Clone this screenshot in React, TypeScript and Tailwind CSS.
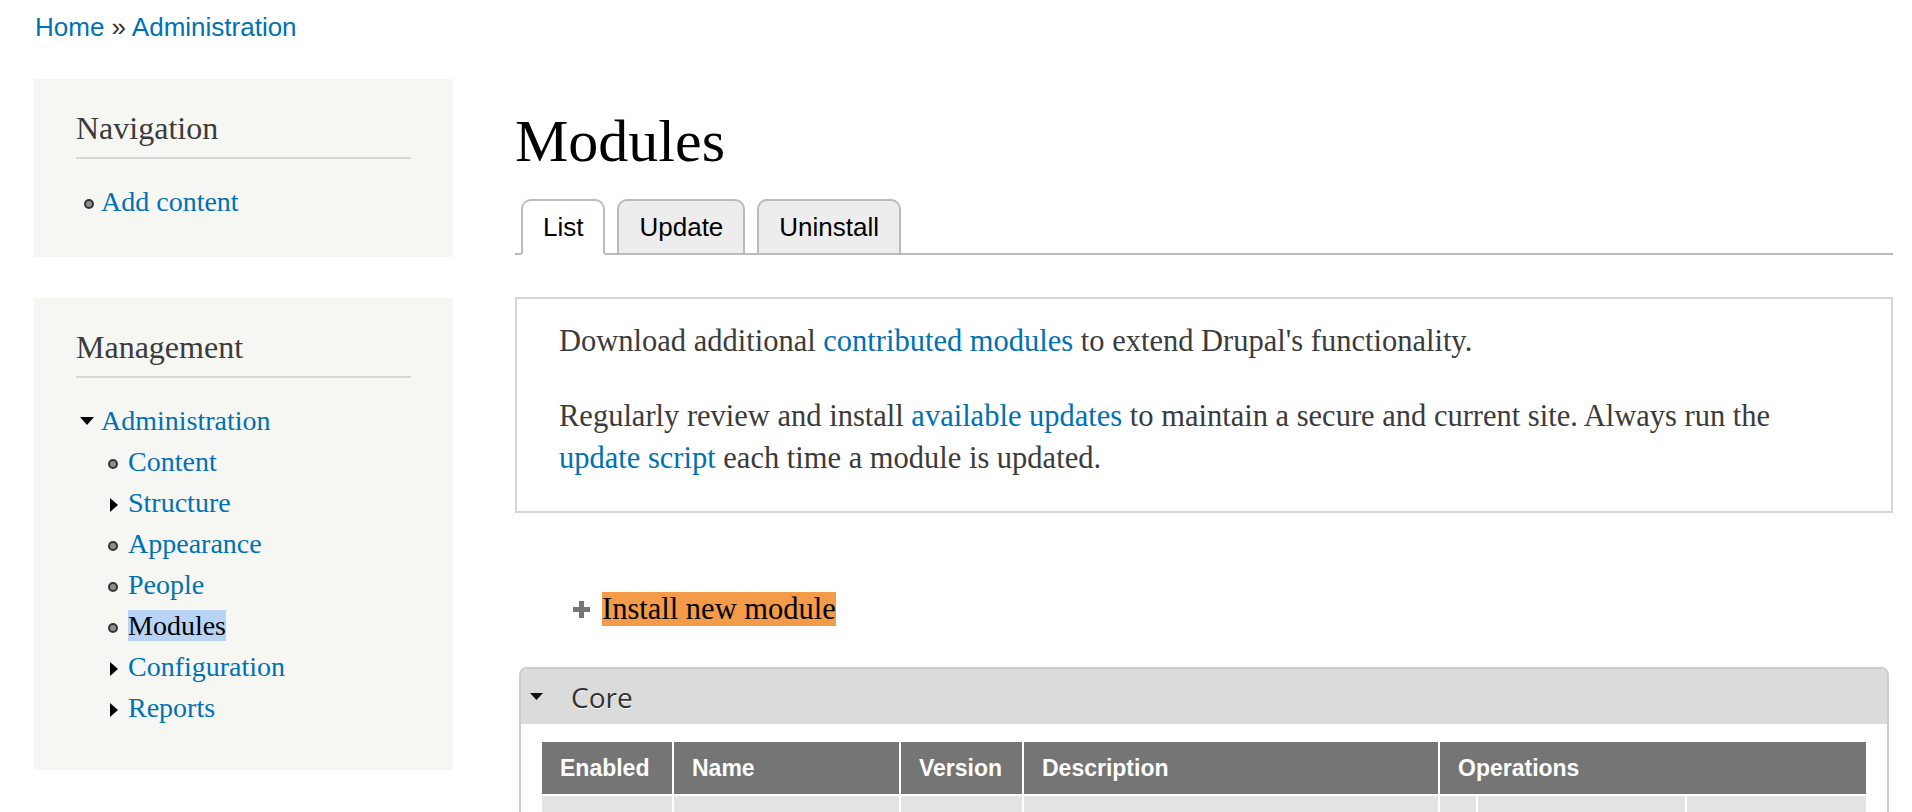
import React from 'react';

type Marker = 'leaf' | 'open' | 'closed';

interface NavItem {
  label: string;
  marker: Marker;
  active?: boolean;
}

const adminChildren: NavItem[] = [
  { label: 'Content', marker: 'leaf' },
  { label: 'Structure', marker: 'closed' },
  { label: 'Appearance', marker: 'leaf' },
  { label: 'People', marker: 'leaf' },
  { label: 'Modules', marker: 'leaf', active: true },
  { label: 'Configuration', marker: 'closed' },
  { label: 'Reports', marker: 'closed' },
];

function MarkerIcon({ type }: { type: Marker }) {
  if (type === 'leaf') {
    return <span className="mt-[4px] block h-[10px] w-[10px] rounded-full border-[2.5px] border-[#333] bg-[#8f8f8f]" />;
  }
  if (type === 'open') {
    return (
      <svg width="14" height="8" viewBox="0 0 14 8" className="mt-[0px] block">
        <polygon points="0,0 14,0 7,8" fill="#000" />
      </svg>
    );
  }
  return (
    <svg width="8" height="14" viewBox="0 0 8 14" className="mt-[4px] block">
      <polygon points="0,0 8,7 0,14" fill="#000" />
    </svg>
  );
}

function NavRow({ item, child }: { item: NavItem; child?: boolean }) {
  return (
    <div className={`flex items-center ${child ? 'pl-[27px]' : ''}`}>
      <span className={`flex w-[25px] justify-end ${child ? 'pr-[10px]' : 'pr-[7px]'}`}>
        <MarkerIcon type={item.marker} />
      </span>
      <a
        href="#"
        className={`leading-[41px] ${item.active ? 'text-black' : 'text-[#0071b3]'}`}
      >
        <span className={item.active ? 'bg-[#b7d4f6]' : ''}>{item.label}</span>
      </a>
    </div>
  );
}

function SidebarBlock({ title, children, last }: { title: string; children: React.ReactNode; last?: boolean }) {
  return (
    <section className={`bg-[#f6f6f2] px-[42px] pt-[29px] ${last ? 'pb-[42px]' : 'pb-[35px]'}`}>
      <h2 className="border-b-2 border-[#d5d5d3] pb-[9px] text-[32px] leading-[40px] text-[#3b3b3b]">{title}</h2>
      <ul className="mt-[22px] text-[28px]">{children}</ul>
    </section>
  );
}

function Tabs() {
  const tabs = ['List', 'Update', 'Uninstall'];
  return (
    <ul className="mt-[22px] flex gap-[12px] border-b-2 border-[#bbbbbb] pl-[6px] font-['Liberation_Sans',Arial,sans-serif] text-[26px]">
      {tabs.map((t, i) => (
        <li
          key={t}
          className={`-mb-[2px] rounded-t-[10px] border-2 px-5 leading-[52px] text-black ${
            i === 0 ? 'border-[#bbbbbb] border-b-white bg-white' : 'border-[#bbbbbb] bg-[#ededed]'
          }`}
        >
          {t}
        </li>
      ))}
    </ul>
  );
}

function PlusIcon() {
  return (
    <svg width="17" height="17" viewBox="0 0 17 17" className="block">
      <path d="M6 0h5v6h6v5h-6v6H6v-6H0V6h6z" fill="#777" />
    </svg>
  );
}

function CoreFieldset() {
  const cellBg = 'bg-[#e3e3e3] h-[80px]';
  return (
    <fieldset className="mx-[4px] mt-[37px] rounded-[8px] border-2 border-[#cccccc]">
      <div className="flex h-[55px] items-center rounded-t-[6px] bg-[#dbdbdb] pl-[9px]">
        <svg width="13" height="7" viewBox="0 0 13 7" className="block">
          <polygon points="0,0 13,0 6.5,7" fill="#111" />
        </svg>
        <span className="ml-[28px] font-['Open_Sans',sans-serif] text-[28px] text-[#333] [text-shadow:0_1px_0_#fff]">
          Core
        </span>
      </div>
      <div className="mx-[21px] mt-[18px] grid grid-cols-[130px_225px_121px_414px_36px_207px_1fr] gap-[2px] font-['Liberation_Sans',Arial,sans-serif]">
        {['Enabled', 'Name', 'Version', 'Description'].map((h) => (
          <div key={h} className="flex h-[52px] items-center bg-[#757575] pl-[18px] text-[23px] font-bold text-white">
            {h}
          </div>
        ))}
        <div className="col-span-3 flex h-[52px] items-center bg-[#757575] pl-[18px] text-[23px] font-bold text-white">
          Operations
        </div>
        <div className={cellBg} />
        <div className={cellBg} />
        <div className={cellBg} />
        <div className={cellBg} />
        <div className={cellBg} />
        <div className={cellBg} />
        <div className={cellBg} />
      </div>
    </fieldset>
  );
}

export default function App() {
  return (
    <div className="h-[812px] overflow-hidden bg-white font-['Liberation_Serif','Times_New_Roman',serif] text-[#3b3b3b]">
      <nav className="pl-[35px] pt-[11px] font-['Liberation_Sans',Arial,sans-serif] text-[26px] leading-[32px]">
        <a href="#" className="text-[#0071b3]">Home</a>
        <span className="text-[#333]"> » </span>
        <a href="#" className="text-[#0071b3]">Administration</a>
      </nav>

      <div className="mt-[36px] flex gap-[62px] pl-[34px] pr-[19px]">
        <aside className="flex w-[419px] shrink-0 flex-col gap-[41px]">
          <SidebarBlock title="Navigation">
            <li>
              <NavRow item={{ label: 'Add content', marker: 'leaf' }} />
            </li>
          </SidebarBlock>
          <SidebarBlock title="Management" last>
            <li>
              <NavRow item={{ label: 'Administration', marker: 'open' }} />
              <ul>
                {adminChildren.map((c) => (
                  <li key={c.label}>
                    <NavRow item={c} child />
                  </li>
                ))}
              </ul>
            </li>
          </SidebarBlock>
        </aside>

        <main className="min-w-0 flex-1">
          <h1 className="mt-[26px] text-[60px] leading-[72px] text-black">Modules</h1>
          <Tabs />

          <div className="mt-[42px] border-2 border-[#d4d7da] pb-[32px] pl-[42px] pr-[60px] pt-[21px] text-[30.5px] leading-[42px]">
            <p>
              Download additional <a href="#" className="text-[#0071b3]">contributed modules</a> to extend Drupal's
              functionality.
            </p>
            <p className="mt-[33px]">
              Regularly review and install <a href="#" className="text-[#0071b3]">available updates</a> to maintain a
              secure and current site. Always run the <a href="#" className="text-[#0071b3]">update script</a> each
              time a module is updated.
            </p>
          </div>

          <ul className="mt-[76px] pl-[58px] text-[30.5px] leading-[41px]">
            <li className="flex items-center gap-[12px]">
              <PlusIcon />
              <a href="#" className="text-black">
                <span className="bg-[#f39b48]">Install new module</span>
              </a>
            </li>
          </ul>

          <CoreFieldset />
        </main>
      </div>
    </div>
  );
}
